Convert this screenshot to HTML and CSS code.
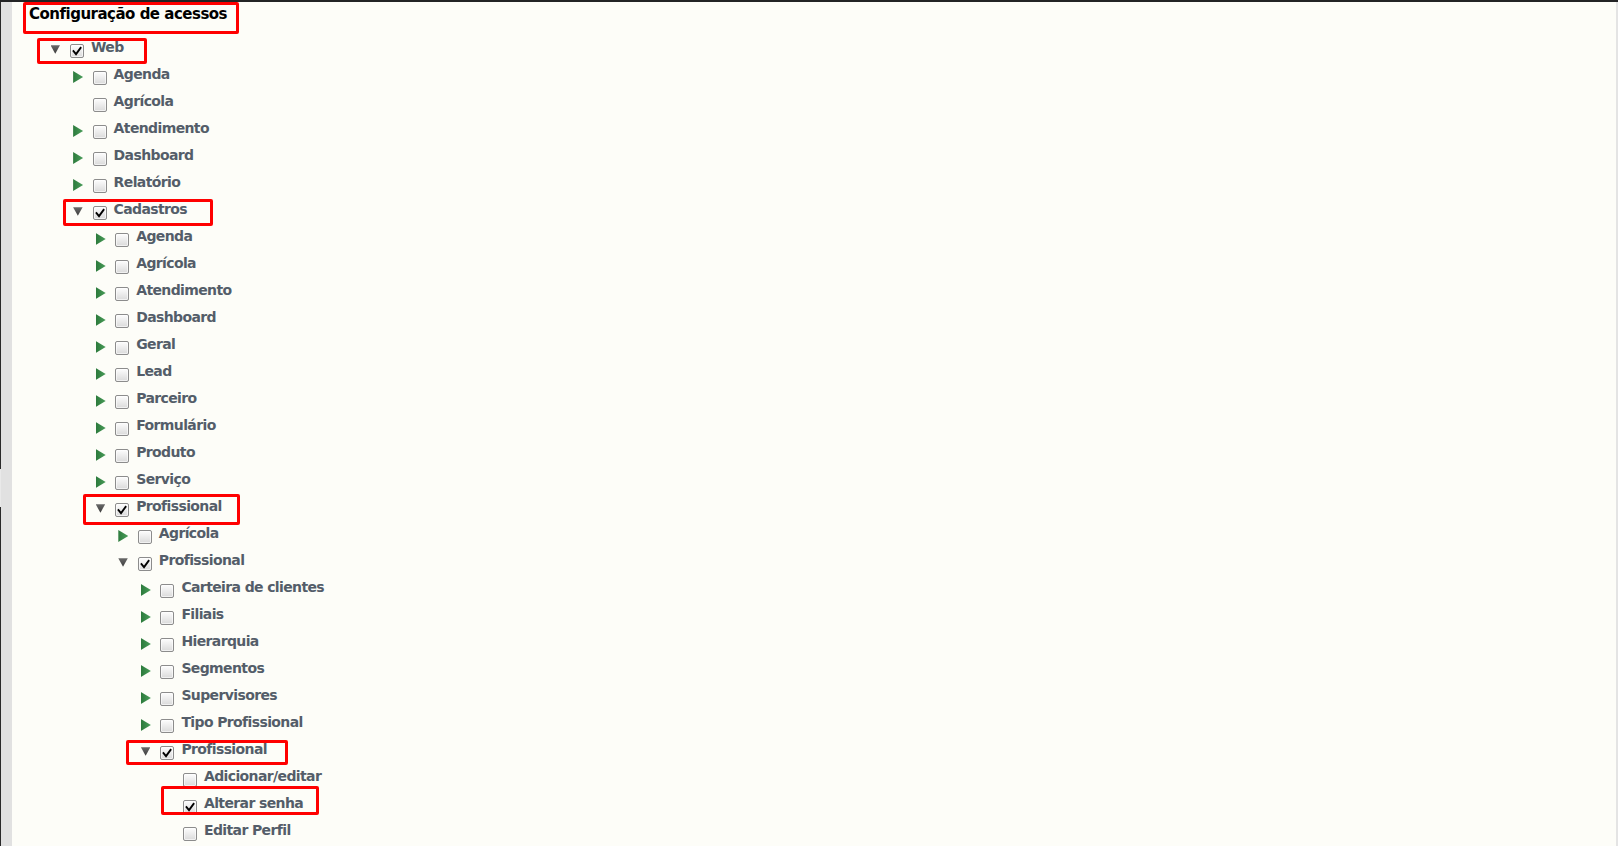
FILE: index.html
```html
<!DOCTYPE html>
<html lang="pt-BR">
<head>
<meta charset="utf-8">
<title>Configuração de acessos</title>
<link rel="stylesheet" href="styles.css">
</head>
<body>
<div class="frame">
  <div class="leftbar">
    <div class="edge edge-top"></div>
    <div class="edge-gap"></div>
    <div class="edge edge-bottom"></div>
  </div>
  <main class="content">
    <h1 class="title">Configuração de acessos</h1>
    <ul class="tree root">
      <li><div class="row"><span class="tg open"></span><span class="cb on"><svg viewBox="0 0 11 11"><path d="M2.3 5.6 L4.6 8.4 L8.8 2.6"/></svg></span><span class="lbl">Web</span></div>
        <ul class="tree">
          <li><div class="row"><span class="tg closed"></span><span class="cb"></span><span class="lbl">Agenda</span></div></li>
          <li><div class="row"><span class="tg"></span><span class="cb"></span><span class="lbl">Agrícola</span></div></li>
          <li><div class="row"><span class="tg closed"></span><span class="cb"></span><span class="lbl">Atendimento</span></div></li>
          <li><div class="row"><span class="tg closed"></span><span class="cb"></span><span class="lbl">Dashboard</span></div></li>
          <li><div class="row"><span class="tg closed"></span><span class="cb"></span><span class="lbl">Relatório</span></div></li>
          <li><div class="row"><span class="tg open"></span><span class="cb on"><svg viewBox="0 0 11 11"><path d="M2.3 5.6 L4.6 8.4 L8.8 2.6"/></svg></span><span class="lbl">Cadastros</span></div>
            <ul class="tree">
              <li><div class="row"><span class="tg closed"></span><span class="cb"></span><span class="lbl">Agenda</span></div></li>
              <li><div class="row"><span class="tg closed"></span><span class="cb"></span><span class="lbl">Agrícola</span></div></li>
              <li><div class="row"><span class="tg closed"></span><span class="cb"></span><span class="lbl">Atendimento</span></div></li>
              <li><div class="row"><span class="tg closed"></span><span class="cb"></span><span class="lbl">Dashboard</span></div></li>
              <li><div class="row"><span class="tg closed"></span><span class="cb"></span><span class="lbl">Geral</span></div></li>
              <li><div class="row"><span class="tg closed"></span><span class="cb"></span><span class="lbl">Lead</span></div></li>
              <li><div class="row"><span class="tg closed"></span><span class="cb"></span><span class="lbl">Parceiro</span></div></li>
              <li><div class="row"><span class="tg closed"></span><span class="cb"></span><span class="lbl">Formulário</span></div></li>
              <li><div class="row"><span class="tg closed"></span><span class="cb"></span><span class="lbl">Produto</span></div></li>
              <li><div class="row"><span class="tg closed"></span><span class="cb"></span><span class="lbl">Serviço</span></div></li>
              <li><div class="row"><span class="tg open"></span><span class="cb on"><svg viewBox="0 0 11 11"><path d="M2.3 5.6 L4.6 8.4 L8.8 2.6"/></svg></span><span class="lbl">Profissional</span></div>
                <ul class="tree">
                  <li><div class="row"><span class="tg closed"></span><span class="cb"></span><span class="lbl">Agrícola</span></div></li>
                  <li><div class="row"><span class="tg open"></span><span class="cb on"><svg viewBox="0 0 11 11"><path d="M2.3 5.6 L4.6 8.4 L8.8 2.6"/></svg></span><span class="lbl">Profissional</span></div>
                    <ul class="tree">
                      <li><div class="row"><span class="tg closed"></span><span class="cb"></span><span class="lbl">Carteira de clientes</span></div></li>
                      <li><div class="row"><span class="tg closed"></span><span class="cb"></span><span class="lbl">Filiais</span></div></li>
                      <li><div class="row"><span class="tg closed"></span><span class="cb"></span><span class="lbl">Hierarquia</span></div></li>
                      <li><div class="row"><span class="tg closed"></span><span class="cb"></span><span class="lbl">Segmentos</span></div></li>
                      <li><div class="row"><span class="tg closed"></span><span class="cb"></span><span class="lbl">Supervisores</span></div></li>
                      <li><div class="row"><span class="tg closed"></span><span class="cb"></span><span class="lbl">Tipo Profissional</span></div></li>
                      <li><div class="row"><span class="tg open"></span><span class="cb on"><svg viewBox="0 0 11 11"><path d="M2.3 5.6 L4.6 8.4 L8.8 2.6"/></svg></span><span class="lbl">Profissional</span></div>
                        <ul class="tree">
                          <li><div class="row"><span class="tg"></span><span class="cb"></span><span class="lbl">Adicionar/editar</span></div></li>
                          <li><div class="row"><span class="tg"></span><span class="cb on"><svg viewBox="0 0 11 11"><path d="M2.3 5.6 L4.6 8.4 L8.8 2.6"/></svg></span><span class="lbl">Alterar senha</span></div></li>
                          <li><div class="row"><span class="tg"></span><span class="cb"></span><span class="lbl">Editar Perfil</span></div></li>
                        </ul>
                      </li>
                    </ul>
                  </li>
                </ul>
              </li>
            </ul>
          </li>
        </ul>
      </li>
    </ul>
  </main>
  <div class="rightbar"></div>
</div>
<div class="marks" aria-hidden="true">
  <div class="mark m-title"></div>
  <div class="mark m-web"></div>
  <div class="mark m-cad"></div>
  <div class="mark m-prof1"></div>
  <div class="mark m-prof2"></div>
  <div class="mark m-senha"></div>
</div>
</body>
</html>
```

FILE: styles.css
```css
html, body {
  margin: 0;
  padding: 0;
}
body {
  position: relative;
  height: 846px;
  overflow: hidden;
  background: #fdfdf8;
  border-top: 2px solid #232425;
  box-sizing: border-box;
  font-family: "DejaVu Sans", Verdana, sans-serif;
}
.frame {
  display: flex;
  height: 844px;
}
.leftbar {
  width: 12px;
  flex: none;
  background: #e1e1e1;
  display: flex;
  flex-direction: column;
}
.edge {
  border-left: 1px solid #2a2a2a;
}
.edge-top {
  height: 467px;
}
.edge-gap {
  height: 38px;
  border-left: 1px solid #e9e9e9;
}
.edge-bottom {
  flex: 1;
}
.rightbar {
  width: 2px;
  flex: none;
  background: #e4e4e4;
}
.content {
  flex: 1;
  background: #fdfdf8;
  padding-top: 2px;
}
.title {
  margin: 0 0 12px 17px;
  font-size: 15px;
  letter-spacing: -0.5px;
  line-height: 20px;
  font-weight: bold;
  color: #000;
}
.tree {
  list-style: none;
  margin: 0;
  padding: 0 0 0 22.6px;
}
.tree.root {
  padding-left: 38px;
}
.row {
  height: 27px;
  display: flex;
  align-items: center;
  white-space: nowrap;
}
.tg {
  width: 20px;
  flex: none;
  display: flex;
  align-items: center;
}
.tg.closed::before {
  content: "";
  display: block;
  width: 10px;
  height: 12px;
  margin-left: 0.5px;
  margin-top: 1px;
  background: linear-gradient(90deg, #2c7a3c, #4a9d5a);
  clip-path: polygon(0 0, 100% 50%, 0 100%);
}
.tg.open::before {
  content: "";
  display: block;
  width: 9.5px;
  height: 8.5px;
  margin-left: 0.5px;
  background: linear-gradient(180deg, #6a6a6a, #3c3c3c);
  clip-path: polygon(0 0, 100% 0, 50% 100%);
}
.cb {
  width: 12px;
  height: 12px;
  flex: none;
  border: 1px solid #8c8c8c;
  border-radius: 2px;
  background: linear-gradient(180deg, #fdfdfd, #dadada);
  box-shadow: inset 0 0 0 1px rgba(255,255,255,0.6);
  margin-top: 2px;
  margin-right: 7px;
  display: flex;
}
.cb svg {
  width: 12px;
  height: 12px;
}
.cb svg path {
  fill: none;
  stroke: #000;
  stroke-width: 1.7;
  stroke-linecap: square;
}
.lbl {
  font-size: 14px;
  letter-spacing: -0.62px;
  font-weight: bold;
  color: #545d69;
  line-height: 16px;
  padding-bottom: 5px;
}
.marks {
  position: absolute;
  left: 0;
  top: 0;
  width: 0;
  height: 0;
}
.mark {
  position: absolute;
  box-sizing: border-box;
  border: 3px solid #ff0000;
  border-radius: 2px;
}
.m-title { left: 23px; top: 0; width: 216px; height: 32px; }
.m-web { left: 37px; top: 36px; width: 110px; height: 26px; }
.m-cad { left: 63px; top: 197px; width: 150px; height: 27px; }
.m-prof1 { left: 83px; top: 492px; width: 157px; height: 31px; }
.m-prof2 { left: 126px; top: 738px; width: 162px; height: 25px; }
.m-senha { left: 161px; top: 784px; width: 158px; height: 29px; }
```
